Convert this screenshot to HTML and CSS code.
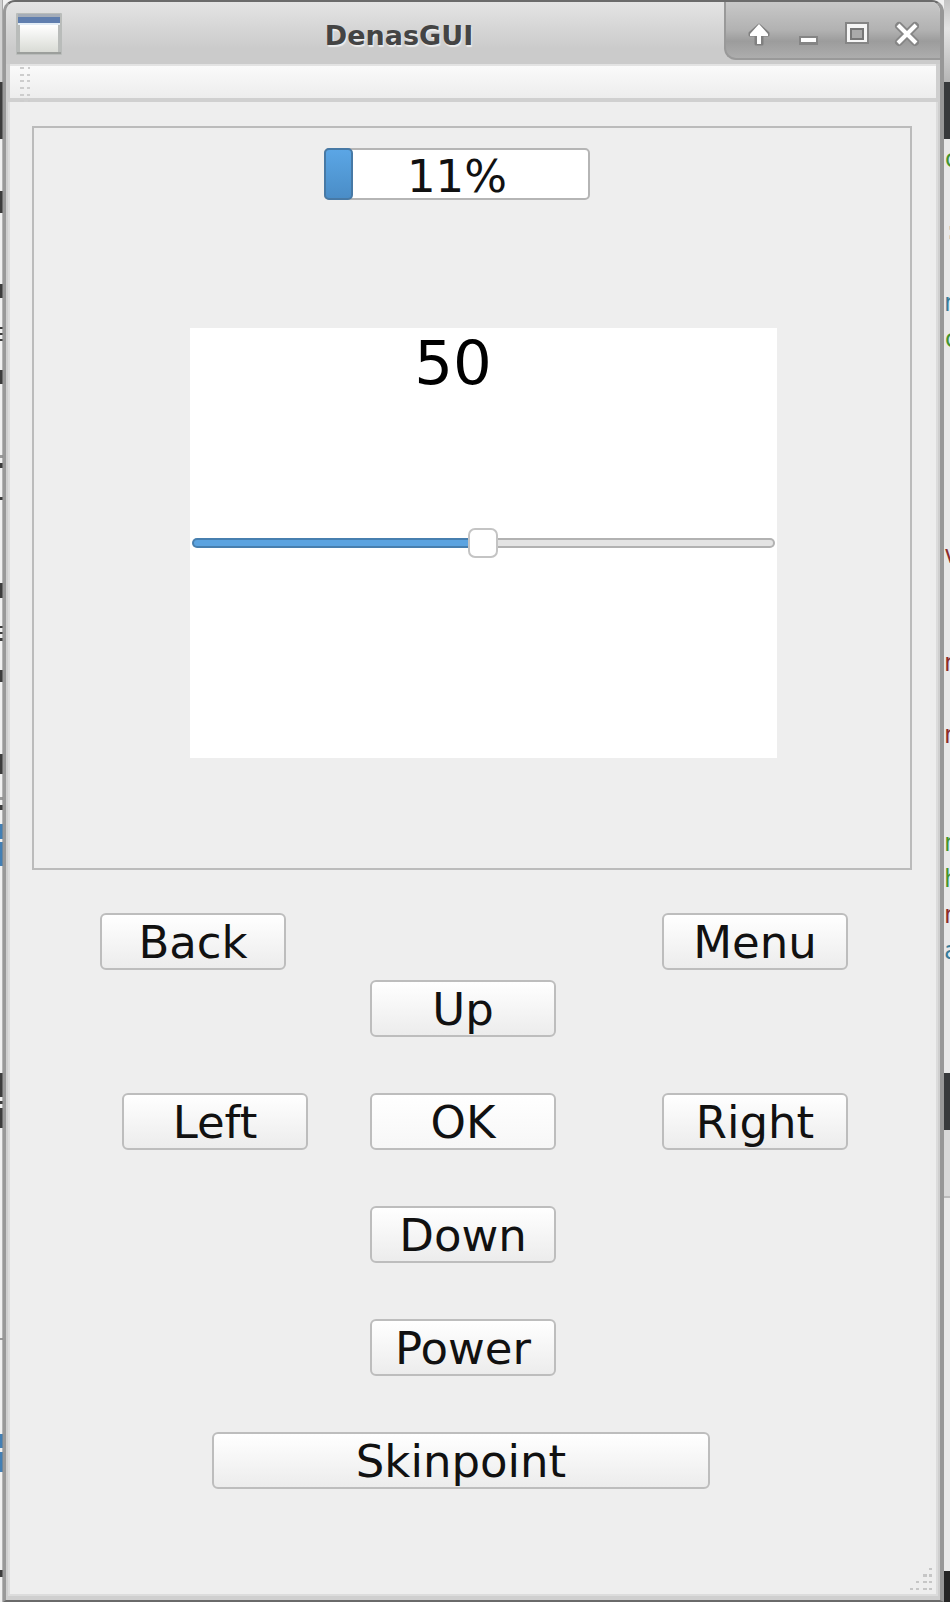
FILE: index.html
```html
<!DOCTYPE html>
<html lang="en">
<head>
<meta charset="utf-8">
<title>DenasGUI</title>
<link rel="stylesheet" href="styles.css">
</head>
<body>
<div class="desktop">
  <div class="behind-left" aria-hidden="true">
    <svg width="3" height="1602" viewBox="0 0 3 1602">
      <path fill="#d2d2d2" d="M0 0h3v82H0z"/>
      <path fill="#3c3c3c" d="M0 82h3v57H0zM0 191h3v22H0zM0 284h3v14H0zM0 327h3v2H0zM0 333h3v2H0zM0 339h3v2H0zM0 370h3v14H0zM0 463h3v5H0zM0 497h3v3H0zM0 583h3v15H0zM0 626h3v2H0zM0 632h3v2H0zM0 638h3v3H0zM0 670h3v12H0zM0 754h3v20H0zM0 805h3v5H0zM0 1073h3v24H0zM0 1101h3v3H0zM0 1108h3v20H0zM0 1570h3v7H0z"/>
      <path fill="#999" d="M0 455h3v3H0zM0 797h3v3H0zM0 1338h3v2H0z"/>
      <path fill="#427fb5" d="M0 824h3v15H0zM0 842h3v24H0zM0 1434h3v14H0zM0 1452h3v20H0z"/>
      <path fill="#8c8c8c" fill-opacity=".6" d="M2 0h1v1602H2z"/>
    </svg>
  </div>
  <div class="window">
    <header class="titlebar">
      <svg class="app-icon" width="46" height="42" viewBox="0 0 46 42" aria-hidden="true">
        <defs><linearGradient id="sheet" x1="0" y1="0" x2="0" y2="1"><stop offset="0" stop-color="#fff"/><stop offset="1" stop-color="#d9dbd5"/></linearGradient></defs>
        <rect width="46" height="42" rx="1" fill="#b9bcba"/>
        <rect x="2" y="1" width="42" height="3" fill="#a5adb8"/>
        <rect x="2" y="4" width="42" height="6" fill="#607eae"/>
        <rect x="2" y="10" width="42" height="2" fill="#e2ecf5"/>
        <rect x="4" y="12" width="38" height="27" fill="url(#sheet)"/>
        <rect x="1" y="39" width="44" height="2" fill="#9c9f9c"/>
      </svg>
      <h1 class="title">DenasGUI</h1>
      <div class="window-buttons">
        <button class="window-button" aria-label="Shade"><svg width="26" height="26" viewBox="0 0 26 26"><g stroke-linejoin="round" stroke-linecap="round"><path d="M13 4 4 12v2h6v9h6v-9h6v-2z" fill="#808080" stroke="#808080" stroke-width="3"/><path d="M13 3 4 13v2h7v8h4v-8h7v-2z" fill="#fff"/></g></svg></button>
        <button class="window-button" aria-label="Minimize"><svg width="26" height="26" viewBox="0 0 26 26"><path d="M4 15h19v9H4z" fill="#858585"/><path d="M6 17h15v4H6z" fill="#fff"/></svg></button>
        <button class="window-button" aria-label="Maximize"><svg width="26" height="26" viewBox="0 0 26 26"><path d="M1 1h24v22H1z" fill="#858585"/><path d="M3 3h20v18H3z" fill="#f6f6f6"/><path d="M6 7h14v12H6z" fill="#777"/><path d="M8 9h10v8H8z" fill="#aaa"/></svg></button>
        <button class="window-button" aria-label="Close"><svg width="26" height="26" viewBox="0 0 26 26"><path d="m6 5 16 16M22 5 6 21" stroke="#868686" stroke-width="8" stroke-linecap="round"/><path d="m5 4 18 18M23 4 5 22" stroke="#fff" stroke-width="4"/></svg></button>
      </div>
    </header>
    <div class="toolbar">
      <svg width="12" height="36" viewBox="0 0 12 36" aria-hidden="true"><path fill="#cdcdcd" d="M0 1h4v2H0zM8 1h2v2H8zM0 8h4v2H0zM7 8h3v2H7zM0 14h4v2H0zM7 14h3v2H7zM0 21h4v2H0zM7 21h3v2H7zM0 28h4v2H0zM7 28h3v2H7zM0 34h4v2H0zM8 34h2v2H8z"/></svg>
    </div>
    <main class="content">
      <section class="screen">
        <div class="progress" role="progressbar" aria-label="Progress" aria-valuenow="11" aria-valuemin="0" aria-valuemax="100">
          <div class="progress-fill" style="width: 11%"></div>
          <span class="progress-text">11%</span>
        </div>
        <div class="panel">
          <output class="value" for="level">50</output>
          <input class="slider" id="level" type="range" min="0" max="100" value="50" aria-label="Level">
        </div>
      </section>
      <div class="top-keys">
        <button class="key">Back</button>
        <button class="key">Menu</button>
      </div>
      <div class="keypad">
        <button class="key middle">Up</button>
        <button class="key left">Left</button>
        <button class="key middle focused">OK</button>
        <button class="key right">Right</button>
        <button class="key middle">Down</button>
        <button class="key middle">Power</button>
        <button class="key wide">Skinpoint</button>
      </div>
      <svg class="size-grip" width="24" height="24" viewBox="0 0 24 24" aria-hidden="true"><path fill="#c6c6c6" d="M20 0h3v2h-3zM14 6h4v3h-4zM20 6h3v3h-3zM7 13h3v2H7zM14 13h4v2h-4zM20 13h3v2h-3zM1 20h3v2H1zM7 20h3v2H7zM14 20h4v2h-4zM20 20h3v2h-3z"/></svg>
    </main>
  </div>
  <div class="behind-right" aria-hidden="true">
    <div class="chrome"></div>
    <div class="dark-bar"></div>
<pre class="code"><span class="green">c</span>

<span class="gray">:</span>

<span class="blue">n</span>
<span class="green">c</span>





<span class="red">v</span>


<span class="red">n</span>

<span class="red">n</span>


<span class="green">n</span>
<span class="green">h</span>
<span class="red">n</span>
<span class="blue">a</span></pre>
    <div class="dark-bar"></div>
    <div class="tab-bar"></div>
    <div class="output-pane"></div>
    <div class="status"></div>
  </div>
</div>
</body>
</html>
```
FILE: styles.css
```css
* {
  box-sizing: border-box;
}

body {
  margin: 0;
  font-family: "DejaVu Sans", sans-serif;
  color: #111;
}

.desktop {
  display: grid;
  grid-template-columns: 3px 1fr 6px;
  min-height: 100vh;
  background: #f1f1f1;
}

.behind-left,
.behind-left svg {
  display: block;
  overflow: hidden;
}

.window {
  display: flex;
  flex-direction: column;
  border-top: 2px solid #6b6b6b;
  border-right: 4px solid #979797;
  border-bottom: 2px solid #6a6a6a;
  border-left: 3px solid #999;
  border-radius: 12px 12px 0 0;
  background: #cfcfcf;
  overflow: hidden;
}

.titlebar {
  display: flex;
  align-items: flex-start;
  height: 62px;
  background: linear-gradient(#e4e4e4, #cbcbcb 75%, #cbcbcb);
}

.app-icon {
  flex: none;
  margin: 11px 0 0 10px;
}

.title {
  flex: 1;
  margin: 0;
  padding-left: 12px;
  font-size: 27px;
  line-height: 68px;
  height: 62px;
  text-align: center;
  color: #444;
  text-shadow: 1px 2px 1px #eee;
}

.window-buttons {
  display: flex;
  align-items: flex-start;
  gap: 23px;
  height: 58px;
  padding: 19px 21px 0 20px;
  border: solid #999;
  border-width: 0 0 2px 2px;
  border-bottom-left-radius: 12px;
  background: linear-gradient(#c8c8c8, #b2b2b2 50%, #9c9c9c 70%, #adadad);
}

.window-button {
  display: block;
  padding: 0;
  border: 0;
  background: none;
}

.window-button svg {
  display: block;
  fill: none;
}

.toolbar {
  height: 38px;
  margin: 0 4px;
  padding-left: 10px;
  border-top: 2px solid #e3e3e3;
  border-bottom: 4px solid #d0d0d0;
  background: linear-gradient(#fafafa, #ededed);
}

.toolbar svg {
  display: block;
}

.content {
  position: relative;
  flex: 1;
  margin: 0 2px 4px;
  padding: 24px 24px 24px 22px;
  border: 2px solid #dcdcdc;
  border-top: 0;
  background: #eee;
}

.screen {
  display: flex;
  flex-direction: column;
  align-items: center;
  height: 744px;
  padding: 20px 0 0;
  border: 2px solid #bbb;
}

.progress {
  display: flex;
  position: relative;
  width: 266px;
  height: 52px;
  margin-right: 30px;
  border: 2px solid #b5b5b5;
  border-radius: 5px;
  background: #fff;
}

.progress-fill {
  margin: -2px;
  border: 2px solid #4779a5;
  border-radius: 5px;
  background: linear-gradient(#5ba6e5, #4a8dc7);
}

.progress-text {
  position: absolute;
  inset: 0;
  font-size: 45px;
  line-height: 54px;
  text-align: center;
}

.panel {
  display: grid;
  grid-template-rows: 1fr 30px 1fr;
  width: 587px;
  height: 430px;
  margin: 128px 0 0 22px;
  padding: 0 2px;
  background: #fff;
}

.value {
  padding-right: 60px;
  font-size: 61px;
  line-height: 70px;
  text-align: center;
  color: #000;
}

.slider {
  appearance: none;
  width: 100%;
  height: 30px;
  margin: 0;
  background: none;
}

.slider::-webkit-slider-runnable-track {
  height: 10px;
  border: 2px solid rgba(0, 0, 0, .22);
  border-radius: 5px;
  background: linear-gradient(90deg, #5ba3e0 50%, #e4e4e4 50%);
  background-origin: border-box;
}

.slider::-webkit-slider-thumb {
  appearance: none;
  width: 30px;
  height: 30px;
  margin-top: -12px;
  border: 2px solid #c4c4c4;
  border-radius: 7px;
  background: #fff;
}

.key {
  width: 186px;
  height: 57px;
  padding: 2px 0 0;
  border: 2px solid #bdbdbd;
  border-radius: 6px;
  background: linear-gradient(#fff, #ececec);
  color: #111;
  font: 45px/51px "DejaVu Sans", sans-serif;
}

.top-keys {
  display: flex;
  justify-content: space-between;
  width: 752px;
  margin: 43px auto 10px;
  padding-left: 4px;
}

.keypad {
  display: grid;
  grid-template-columns: 270px 1fr 292px;
  row-gap: 56px;
  width: 752px;
  margin: 0 auto;
  padding-left: 4px;
}

.middle {
  grid-column: 2;
}

.left {
  grid-column: 1;
  margin-left: 22px;
}

.right {
  justify-self: end;
}

.focused {
  background: linear-gradient(#fff, #f7f7f7);
}

.wide {
  grid-column: 1 / -1;
  justify-self: center;
  width: 498px;
  margin-right: 26px;
}

.size-grip {
  position: absolute;
  right: 3px;
  bottom: 2px;
}

.behind-right {
  display: flex;
  flex-direction: column;
  overflow: hidden;
}

.chrome {
  height: 82px;
  background: linear-gradient(#c4c4c4, #e4e4e4 35%, #b5b5b5);
}

.dark-bar {
  height: 57px;
  background: #37393b;
}

.code {
  height: 934px;
  margin: 0;
  padding-top: 2px;
  background: #e8e8e8;
  font: 24px/36px "DejaVu Sans Mono", monospace;
  overflow: hidden;
}

.green { color: #43942f; }
.blue { color: #397b98; }
.red { color: #8c2c2c; }
.gray { color: #999; }

.tab-bar {
  height: 68px;
  border-bottom: 2px solid #bbb;
  background: #d9d9d9;
}

.output-pane {
  flex: 1;
  background: #e9e9e9;
}

.status {
  height: 31px;
  background: #252525;
}
```
